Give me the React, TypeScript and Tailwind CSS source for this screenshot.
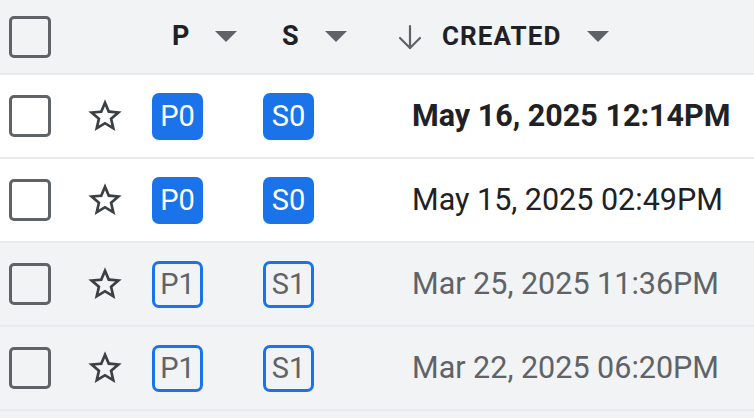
import React from "react";

const Checkbox = () => (
  <div className="w-[42px] h-[42px] rounded-[5px] border-[3.5px] border-[#5f6368]" />
);

const Star = () => (
  <svg width="40" height="40" viewBox="0 0 24 24" fill="#3c4043">
    <path d="M22 9.24l-7.19-.62L12 2 9.19 8.63 2 9.24l5.46 4.73L5.82 21 12 17.27 18.18 21l-1.63-7.03L22 9.24zM12 15.4l-3.76 2.27 1-4.28-3.32-2.88 4.38-.38L12 6.1l1.71 4.04 4.38.38-3.32 2.88 1 4.28L12 15.4z" />
  </svg>
);

const Caret = () => (
  <svg width="22" height="11" viewBox="0 0 22 11">
    <path d="M0 0h22L11 11z" fill="#5f6368" />
  </svg>
);

const Badge = ({ label, filled }: { label: string; filled: boolean }) =>
  filled ? (
    <div className="w-[51px] h-[47px] rounded-[7px] bg-[#1a73e8] text-white text-[29px] flex items-center justify-center leading-none">
      {label}
    </div>
  ) : (
    <div className="w-[51px] h-[47px] rounded-[7px] border-[3px] border-[#1a73e8] text-[#5f6368] text-[29px] flex items-center justify-center leading-none">
      {label}
    </div>
  );

type Row = { p: string; s: string; date: string; unread: boolean; bold: boolean };

const rows: Row[] = [
  { p: "P0", s: "S0", date: "May 16, 2025 12:14PM", unread: true, bold: true },
  { p: "P0", s: "S0", date: "May 15, 2025 02:49PM", unread: true, bold: false },
  { p: "P1", s: "S1", date: "Mar 25, 2025 11:36PM", unread: false, bold: false },
  { p: "P1", s: "S1", date: "Mar 22, 2025 06:20PM", unread: false, bold: false },
];

export default function App() {
  return (
    <div className="w-[754px] h-[418px] overflow-hidden bg-[#f1f3f4] font-[Roboto,sans-serif]">
      <div className="h-[75px] flex items-center border-b-2 border-[#e8eaed] bg-[#f1f3f4]">
        <div className="w-[80px] pl-[9px] shrink-0">
          <Checkbox />
        </div>
        <div className="w-[50px] shrink-0" />
        <div className="w-[132px] shrink-0 pl-[42px] flex items-center">
          <span className="text-[27px] font-bold text-[#202124] w-[20px]">P</span>
          <span className="ml-[23px]"><Caret /></span>
        </div>
        <div className="w-[118px] shrink-0 pl-[20px] flex items-center">
          <span className="text-[27px] font-bold text-[#202124] w-[17px]">S</span>
          <span className="ml-[26px]"><Caret /></span>
        </div>
        <div className="flex-1 pl-[18px] flex items-center">
          <svg width="24" height="26" viewBox="0 0 24 26" fill="none" stroke="#5f6368" strokeWidth="2.2" strokeLinecap="round" strokeLinejoin="round">
            <path d="M12 2v22" />
            <path d="M2 14l10 10 10-10" />
          </svg>
          <span className="ml-[20px] text-[26px] font-bold text-[#202124] tracking-[1.1px]">CREATED</span>
          <span className="ml-[25px]"><Caret /></span>
        </div>
      </div>
      {rows.map((r, i) => (
        <div
          key={i}
          className={
            "h-[84px] flex items-center border-b-2 border-[#e8eaed] " +
            (r.unread ? "bg-white" : "bg-[#f1f3f4]")
          }
        >
          <div className="w-[80px] pl-[9px] shrink-0">
            <Checkbox />
          </div>
          <div className="w-[50px] shrink-0 flex justify-center">
            <Star />
          </div>
          <div className="w-[132px] shrink-0 pl-[22px]">
            <Badge label={r.p} filled={r.unread} />
          </div>
          <div className="w-[118px] shrink-0 pl-[1px]">
            <Badge label={r.s} filled={r.unread} />
          </div>
          <div
            className={
              "flex-1 pl-[32px] text-[30.5px] whitespace-nowrap " +
              (r.bold
                ? "font-bold text-[#202124]"
                : r.unread
                ? "text-[#202124]"
                : "text-[#5f6368]")
            }
          >
            {r.date}
          </div>
        </div>
      ))}
    </div>
  );
}
